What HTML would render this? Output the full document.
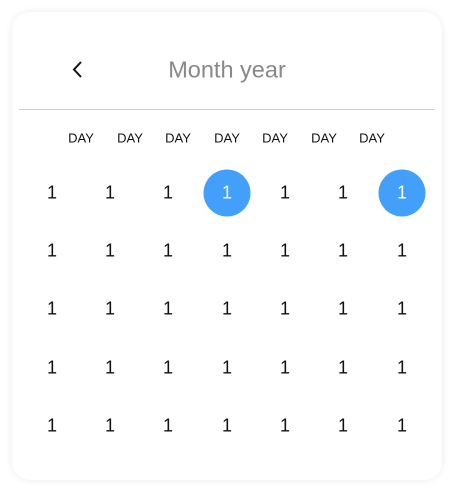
<!DOCTYPE html>
<html><head><meta charset="utf-8"><style>
html,body{margin:0;padding:0;width:454px;height:492px;background:#fff;overflow:hidden;font-family:"Liberation Sans",sans-serif;}
.card{position:absolute;left:12px;top:12px;width:430px;height:468px;border-radius:18px;background:#fff;box-shadow:0 0 8px rgba(0,0,0,0.08);}
.t{position:absolute;transform:translate(-50%,-50%);white-space:nowrap;}
.title{font-size:23.5px;color:#888;}
.line{position:absolute;left:19px;top:109px;width:416px;height:1px;background:#ccc;}
.day{font-size:13px;color:#111;}
.n{font-size:18px;color:#111;}
.c{position:absolute;width:47px;height:47px;border-radius:50%;background:#42a0fb;transform:translate(-50%,-50%);}
</style></head><body>
<div class="card"></div>
<svg style="position:absolute;left:70px;top:60px" width="16" height="20"><path d="M11 2 L4 9.5 L11 17" fill="none" stroke="#111" stroke-width="2"/></svg>
<div class="t title" style="left:227px;top:70px">Month year</div>
<div class="line"></div>
<div id="g"></div>
<script>
var g=document.getElementById('g'),h='';
var dx=[81,130,178,227,275,324,372];
dx.forEach(function(x){h+='<div class="t day" style="left:'+x+'px;top:138px">DAY</div>';});
var cx=[52,110,168,227,285,343,402],ry=[193,251,309,368,426];
ry.forEach(function(y,ri){cx.forEach(function(x,ci){
var sel=ri==0&&(ci==3||ci==6);
if(sel)h+='<div class="c" style="left:'+x+'px;top:'+y+'px"></div>';
h+='<div class="t n" style="left:'+x+'px;top:'+y+'px;'+(sel?'color:#fff':'')+'">1</div>';});});
g.innerHTML=h;
</script>
</body></html>
